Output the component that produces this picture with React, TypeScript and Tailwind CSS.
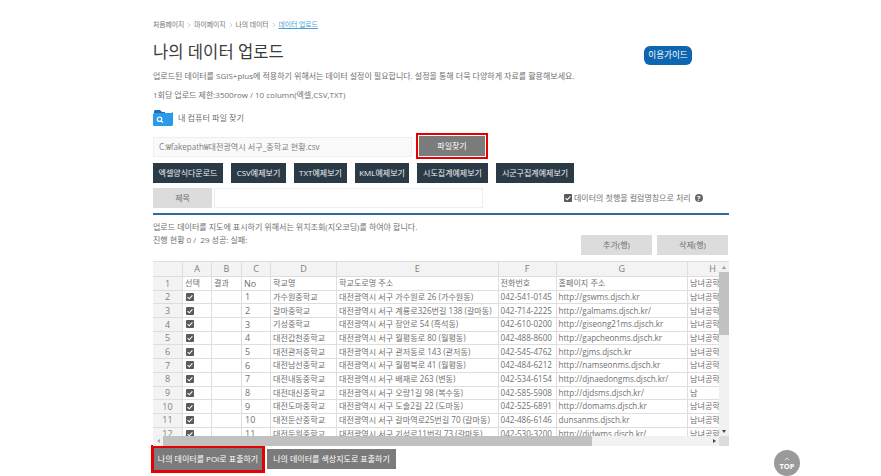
import { ChevronRight, ChevronUp } from "lucide-react";

const columns = ["A", "B", "C", "D", "E", "F", "G", "H"];

const rows = [
  ["1", "가수원중학교", "대전광역시 서구 가수원로 26 (가수원동)", "042-541-0145", "http://gswms.djsch.kr", "남녀공학"],
  ["2", "갈마중학교", "대전광역시 서구 계룡로326번길 138 (갈마동)", "042-714-2225", "http://galmams.djsch.kr/", "남녀공학"],
  ["3", "기성중학교", "대전광역시 서구 장안로 54 (흑석동)", "042-610-0200", "http://giseong21ms.djsch.kr", "남녀공학"],
  ["4", "대전갑천중학교", "대전광역시 서구 월평동로 80 (월평동)", "042-488-8600", "http://gapcheonms.djsch.kr", "남녀공학"],
  ["5", "대전관저중학교", "대전광역시 서구 관저동로 143 (관저동)", "042-545-4762", "http://gjms.djsch.kr", "남녀공학"],
  ["6", "대전남선중학교", "대전광역시 서구 월평북로 41 (월평동)", "042-484-6212", "http://namseonms.djsch.kr", "남녀공학"],
  ["7", "대전내동중학교", "대전광역시 서구 배재로 263 (변동)", "042-534-6154", "http://djnaedongms.djsch.kr/", "남녀공학"],
  ["8", "대전대신중학교", "대전광역시 서구 오량1길 98 (복수동)", "042-585-5908", "http://djdsms.djsch.kr/", "남"],
  ["9", "대전도마중학교", "대전광역시 서구 도솔2길 22 (도마동)", "042-525-6891", "http://domams.djsch.kr", "남녀공학"],
  ["10", "대전둔산중학교", "대전광역시 서구 갈마역로25번길 70 (갈마동)", "042-486-6146", "dunsanms.djsch.kr", "남녀공학"],
  ["11", "대전둔원중학교", "대전광역시 서구 기성로11번길 73 (갈마동)", "042-530-3200", "http://djdwms.djsch.kr/", "남녀공학"],
];

const sampleButtons = [
  { label: "엑셀양식다운로드", w: "w-[70px]" },
  { label: "CSV예제보기", w: "w-[55px]" },
  { label: "TXT예제보기", w: "w-[53px]" },
  { label: "KML예제보기", w: "w-[54px]" },
  { label: "시도집계예제보기", w: "w-[71px]" },
  { label: "시군구집계예제보기", w: "w-[78px]" },
];

const gridCols = "grid grid-cols-[30px_29px_30px_29px_66px_161.5px_58px_131.5px_50px]";
const cell = "border-r border-b border-[#dedede] px-[2px] whitespace-nowrap overflow-hidden flex items-center";

function Check() {
  return (
    <svg width="8" height="8" viewBox="0 0 8 8" className="shrink-0">
      <rect width="8" height="8" rx="1" fill="#5a5a5a" />
      <path d="M1.6 4.1 3.3 5.8 6.4 2.3" fill="none" stroke="#fff" strokeWidth="1.1" />
    </svg>
  );
}

function FolderIcon() {
  return (
    <svg width="20" height="16" viewBox="0 0 20 16">
      <path d="M1 1.5C1 .7 1.6 0 2.4 0H7l2 2h9.6c.8 0 1.4.6 1.4 1.4V4H1z" fill="#1b6fc0" />
      <rect x="0" y="3" width="20" height="13" rx="1.5" fill="#2a9be8" />
      <rect x="12" y="1.6" width="7" height="1.4" fill="#fff" />
      <circle cx="6.5" cy="9.2" r="2.2" fill="none" stroke="#fff" strokeWidth="1.2" />
      <path d="M8.2 10.9 10 12.6" stroke="#fff" strokeWidth="1.3" />
    </svg>
  );
}

function DataGrid() {
  return (
    <div className="relative h-[185px] w-[576px] overflow-hidden border-t border-[#dedede] bg-white text-[8.1px] text-[#707070]">
      <div className="h-[174px] w-[566px] overflow-hidden">
        <div className={`${gridCols} h-[15px] bg-[#f3f3f3] text-[#808080]`}>
          <div className={cell} />
          {columns.map((c) => (
            <div key={c} className={`${cell} justify-center text-[9px]`}>
              {c}
            </div>
          ))}
        </div>
        <div className={`${gridCols} h-[13.7px]`}>
          <div className={`${cell} justify-center bg-[#f3f3f3] text-[9px] text-[#808080]`}>1</div>
          <div className={cell}>선택</div>
          <div className={cell}>결과</div>
          <div className={`${cell} text-[9px]`}>No</div>
          <div className={cell}>학교명</div>
          <div className={cell}>학교도로명 주소</div>
          <div className={cell}>전화번호</div>
          <div className={cell}>홈페이지 주소</div>
          <div className={cell}>남녀공학</div>
        </div>
        {rows.map((r, i) => (
          <div key={r[0]} className={`${gridCols} h-[13.7px]`}>
            <div className={`${cell} justify-center bg-[#f3f3f3] text-[9px] text-[#808080]`}>{i + 2}</div>
            <div className={`${cell} pl-[3px]`}>
              <Check />
            </div>
            <div className={cell} />
            <div className={`${cell} pl-[3px] text-[9px]`}>{r[0]}</div>
            {r.slice(1).map((v, j) => (
              <div key={j} className={cell}>
                {v}
              </div>
            ))}
          </div>
        ))}
      </div>

      {/* vertical scrollbar */}
      <div className="absolute right-0 top-0 flex h-[174px] w-[10px] flex-col bg-[#f1f1f1]">
        <div className="flex h-[10px] items-center justify-center">
          <div className="border-x-[2.5px] border-b-[3px] border-x-transparent border-b-[#999]" />
        </div>
        <div className="h-[63px] bg-[#c1c1c1]" />
        <div className="flex-1" />
        <div className="flex h-[10px] items-center justify-center">
          <div className="border-x-[2.5px] border-t-[3px] border-x-transparent border-t-[#444]" />
        </div>
      </div>

      {/* horizontal scrollbar */}
      <div className="flex h-[10px] w-[576px] bg-[#f1f1f1]">
        <div className="flex w-[10px] items-center justify-center">
          <div className="border-y-[2.5px] border-r-[3px] border-y-transparent border-r-[#aaa]" />
        </div>
        <div className="w-[429px] bg-[#c1c1c1]" />
        <div className="flex-1" />
        <div className="flex w-[10px] items-center justify-center">
          <div className="border-y-[2.5px] border-l-[3px] border-y-transparent border-l-[#444]" />
        </div>
        <div className="w-[10px] bg-[#dcdcdc]" />
      </div>
    </div>
  );
}

export default function App() {
  return (
    <div className="relative h-[476px] w-[881px] overflow-hidden bg-white font-['Open_Sans','Noto_Sans_CJK_KR',sans-serif] text-[#707070]">
      <div className="ml-[153px] w-[576px]">
        {/* Breadcrumb */}
        <div className="mt-[19px] flex h-[12px] items-center gap-[1px] text-[6.8px]">
          <span>처음페이지</span>
          <ChevronRight size={8} strokeWidth={1} />
          <span>마이페이지</span>
          <ChevronRight size={8} strokeWidth={1} />
          <span>나의 데이터</span>
          <ChevronRight size={8} strokeWidth={1} />
          <span className="text-[#4a9fd8] underline">데이터 업로드</span>
        </div>

        {/* Title */}
        <div className="mt-[9px] flex h-[24px] items-center justify-between">
          <h1 className="text-[16.6px] font-normal leading-none text-[#3c3c3c]">나의 데이터 업로드</h1>
          <button className="mr-[37px] mt-[6px] h-[19px] w-[48px] rounded-[6px] bg-[#0f66b0] text-[8.6px] text-white">
            이용가이드
          </button>
        </div>

        <p className="mt-[6px] text-[8px] leading-[12px]">
          업로드된 데이터를 SGIS+plus에 적용하기 위해서는 데이터 설정이 필요합니다. 설정을 통해 더욱 다양하게 자료를 활용해보세요.
        </p>
        <p className="mt-[7px] text-[8px] leading-[12px]">1회당 업로드 제한:3500row / 10 column(엑셀,CSV,TXT)</p>

        {/* File chooser */}
        <div className="mt-[9px] flex h-[16px] items-center gap-[5px] text-[8.1px]">
          <FolderIcon />
          <span>내 컴퓨터 파일 찾기</span>
        </div>

        <div className="mt-[10px] flex items-start gap-[7px]">
          <div className="mt-[1px] flex h-[20px] w-[259px] items-center border border-[#eee] bg-[#fafafa] px-[5px] text-[8.1px] text-[#808080]">
            C:₩fakepath₩대전광역시 서구_중학교 현황.csv
          </div>
          <button className="h-[20px] w-[66px] bg-[#7b7b7b] text-[8px] text-white outline-[2.5px] outline-offset-[1.5px] outline-[#e60000] outline-solid">
            파일찾기
          </button>
        </div>

        {/* Sample buttons */}
        <div className="mt-[6px] flex gap-[8px]">
          {sampleButtons.map((b) => (
            <button key={b.label} className={`${b.w} h-[20px] bg-[#2b3a47] text-[8px] text-[#eef1f3]`}>
              {b.label}
            </button>
          ))}
        </div>

        {/* Title row */}
        <div className="mt-[5px] flex h-[20px] items-center">
          <div className="flex h-[20px] w-[59px] items-center justify-center bg-[#dcdcdc] text-[8px]">제목</div>
          <div className="ml-[2px] h-[20px] w-[269px] border border-[#eee] bg-white" />
          <div className="ml-[81px] flex items-center gap-[2px] text-[8px]">
            <Check />
            <span>데이터의 첫행을 컬럼명칭으로 처리</span>
            <span className="ml-[2px] flex h-[8px] w-[8px] items-center justify-center rounded-full bg-[#666] text-[7px] font-bold leading-none text-white">
              ?
            </span>
          </div>
        </div>
        <div className="mt-[5px] h-[2px] bg-[#2f6aa3]" />

        {/* Geocoding info */}
        <div className="flex h-[46px] justify-between">
          <div>
            <p className="mt-[6px] text-[8px] leading-[12px]">업로드 데이터를 지도에 표시하기 위해서는 위치조회(지오코딩)를 하여야 합니다.</p>
            <p className="mt-[1px] text-[8px] leading-[12px]">진행 현황 0 /&nbsp; 29 성공: 실패:</p>
          </div>
          <div className="mr-[1px] mt-[20px] flex gap-[5px]">
            <button className="h-[20px] w-[71px] bg-[#dcdcdc] text-[8px] text-[#707070]">추가(행)</button>
            <button className="h-[20px] w-[71px] bg-[#dcdcdc] text-[8px] text-[#707070]">삭제(행)</button>
          </div>
        </div>

        <DataGrid />

        {/* Bottom buttons */}
        <div className="mt-[2px] flex items-center gap-[5px] pl-[1px]">
          <button className="h-[22px] w-[108px] bg-[#7b7b7b] text-[8px] text-white outline-[3px] outline-[#e60000] outline-solid">
            나의 데이터를 POI로 표출하기
          </button>
          <button className="h-[20px] w-[129px] bg-[#7b7b7b] text-[8px] text-white">나의 데이터를 색상지도로 표출하기</button>
        </div>
      </div>

      {/* Scroll to top */}
      <button className="absolute left-[774px] top-[450px] flex h-[26px] w-[26px] flex-col items-center justify-center rounded-full bg-[#9a9a9a] text-[7.5px] font-bold leading-none text-white">
        <ChevronUp size={8} strokeWidth={2} />
        TOP
      </button>
    </div>
  );
}
